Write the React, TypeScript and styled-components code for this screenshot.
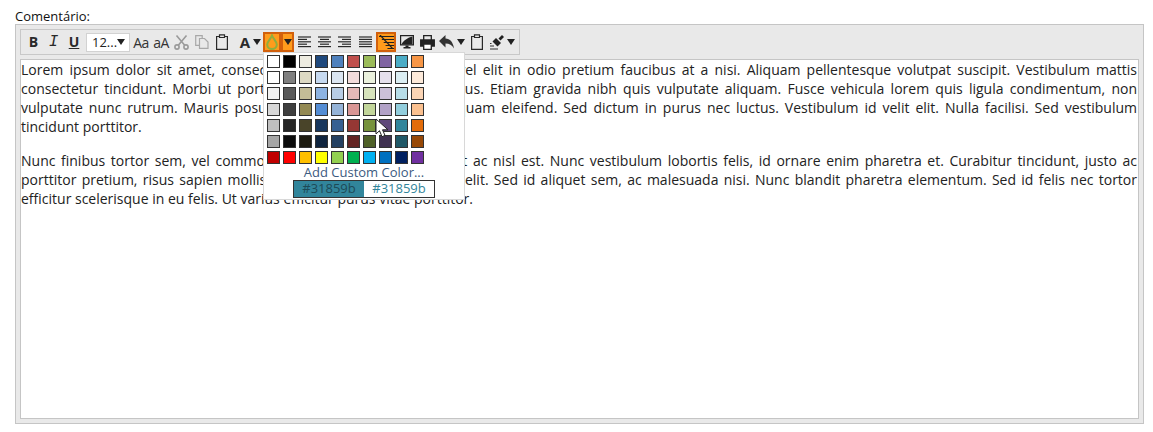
import React from 'react';
import styled, { createGlobalStyle } from 'styled-components';

const GlobalStyle = createGlobalStyle`
  html, body {
    margin: 0;
    padding: 0;
    background: #fff;
    font-family: "Open Sans", sans-serif;
    overflow: hidden;
  }
`;

const Page = styled.div`
  width: 1153px;
  height: 432px;
  padding: 9px 9px 0 15px;
  box-sizing: border-box;
`;

const Label = styled.label`
  display: block;
  height: 15px;
  font-size: 13px;
  line-height: 15px;
  color: #111;
`;

const EditorFrame = styled.div`
  position: relative;
  box-sizing: border-box;
  width: 1129px;
  height: 400px;
  padding: 4px;
  display: flex;
  flex-direction: column;
  gap: 4px;
  background: #e9e9e9;
  border: 1px solid #c5c5c5;
`;

const Toolbar = styled.div`
  box-sizing: border-box;
  align-self: flex-start;
  width: 500px;
  height: 26px;
  padding: 2px 3px;
  display: flex;
  align-items: center;
  border: 1px solid #c8c8c8;
  background: #e9e9e9;
`;

const ToolButton = styled.div<{ $w?: number; $active?: boolean; $pad?: number }>`
  box-sizing: border-box;
  flex: none;
  width: ${(p) => p.$w ?? 20}px;
  height: 20px;
  padding-left: ${(p) => p.$pad ?? 0}px;
  display: flex;
  align-items: center;
  justify-content: center;
  gap: 3px;
  color: #2a2a2a;
  background: ${(p) => (p.$active ? '#ff9c1c' : 'transparent')};
  border: ${(p) => (p.$active ? '2px solid #d2600c' : 'none')};
`;

const Glyph = styled.span<{ $under?: boolean; $size?: number }>`
  font-weight: 700;
  font-size: ${(p) => p.$size ?? 14}px;
  line-height: 16px;
  text-decoration: ${(p) => (p.$under ? 'underline' : 'none')};
`;

const ItalicGlyph = styled.span`
  font-family: "Liberation Mono", monospace;
  font-style: italic;
  font-size: 16px;
  line-height: 16px;
`;

const CaseGlyph = styled.span`
  font-size: 14px;
  letter-spacing: -0.5px;
  color: #333;
`;

const FontSelect = styled.div`
  box-sizing: border-box;
  flex: none;
  width: 44px;
  height: 19px;
  margin: 0 1px 0 2px;
  padding: 0 5px 0 5px;
  display: flex;
  align-items: center;
  justify-content: space-between;
  background: #fff;
  border: 1px solid #d2d2d2;
  font-size: 13px;
  color: #222;
`;

const Caret = styled.span`
  flex: none;
  width: 0;
  height: 0;
  border-left: 4.5px solid transparent;
  border-right: 4.5px solid transparent;
  border-top: 6px solid #222;
`;

const Content = styled.div`
  flex: 1;
  box-sizing: border-box;
  padding: 0 1px 0 0;
  background: #fff;
  border: 1px solid #c5c5c5;
  font-size: 14px;
  color: #222;
  text-align: justify;
`;

const Paragraph = styled.p`
  margin: 0 0 15px;
`;

const ColorPopup = styled.div`
  position: absolute;
  left: 247px;
  top: 27px;
  box-sizing: border-box;
  width: 202px;
  height: 148px;
  padding: 2px 3px 0;
  display: flex;
  flex-direction: column;
  align-items: center;
  background: #fff;
  border: 1px solid #d8d8d8;
`;

const SwatchGrid = styled.div`
  align-self: flex-start;
  display: grid;
  grid-template-columns: repeat(10, 13px);
  grid-auto-rows: 13px;
  gap: 3px;
`;

const Swatch = styled.div<{ $color: string }>`
  box-sizing: border-box;
  background: ${(p) => p.$color};
  border: 1px solid #333;
`;

const CustomColor = styled.div`
  margin-top: 1px;
  height: 15px;
  font-size: 13px;
  line-height: 15px;
  color: #3c5a80;
`;

const Preview = styled.div`
  box-sizing: border-box;
  width: 142px;
  height: 18px;
  display: flex;
  border: 1px solid #333;
  font-size: 13px;
  line-height: 15px;
  text-align: center;
`;

const PreviewOld = styled.div`
  flex: 1;
  background: #31859b;
  color: #1d4a57;
`;

const PreviewNew = styled.div`
  flex: 1;
  background: #fff;
  color: #31859b;
`;

const Cursor = styled.svg`
  position: absolute;
  left: 359px;
  top: 93px;
`;

const ICON_COLOR = '#2a2a2a';

function Scissors() {
  return (
    <svg width="15" height="15" viewBox="0 0 15 15" fill="none" stroke="#9a9a9a" strokeWidth="1.6">
      <circle cx="3" cy="12" r="2.100" />
      <circle cx="12" cy="12" r="2.100" />
      <path d="M4.300 10.300 12.500 .5M10.700 10.300 2.500 .5" />
    </svg>
  );
}

function CopyIcon() {
  return (
    <svg width="14" height="14" viewBox="0 0 14 14" fill="#e9e9e9" stroke="#a8a8a8" strokeWidth="1.200">
      <path d="M.7.7h6.500v9.600H.7z" />
      <path d="M4.500 3.500h5l3.500 3.500v6.300H4.500z" />
    </svg>
  );
}

function Clipboard() {
  return (
    <svg width="12" height="16" viewBox="0 0 12 16" fill="none" stroke={ICON_COLOR} strokeWidth="1.200">
      <path d="M3 2.500H.6v12.900h10.800V2.500H9" />
      <path d="M3.500.8h5v2.700h-5z" fill="#e9e9e9" />
    </svg>
  );
}

function Drop() {
  return (
    <svg width="12" height="16" viewBox="0 0 12 16" fill="none" stroke="#8fae3e" strokeWidth="2">
      <path d="M6 1.500C5 4.500 1.200 7.500 1.200 10.500a4.800 4.500 0 0 0 9.600 0C10.800 7.500 7 4.500 6 1.500z" />
    </svg>
  );
}

const ALIGN_LINES: Record<string, [number, number][]> = {
  left: [[0, 13], [0, 9], [0, 13], [0, 9], [0, 13]],
  center: [[0, 13], [2, 11], [0, 13], [2, 11], [0, 13]],
  right: [[0, 13], [4, 13], [0, 13], [4, 13], [0, 13]],
  justify: [[0, 13], [0, 13], [0, 13], [0, 13], [0, 13]],
};

function AlignIcon({ kind }: { kind: string }) {
  return (
    <svg width="13" height="12" viewBox="0 0 13 12" stroke={ICON_COLOR} strokeWidth="1.200">
      {ALIGN_LINES[kind].map(([x1, x2], i) => (
        <line key={i} x1={x1} x2={x2} y1={1 + i * 2.4} y2={1 + i * 2.4} />
      ))}
    </svg>
  );
}

function ClearFormat() {
  return (
    <svg width="15" height="14" viewBox="0 0 15 14" stroke="#222" strokeWidth="1">
      {[1.500, 4.500, 7.500, 10.500, 13.500].map((y) => (
        <line key={y} x1={y < 2 ? 0 : y / 1.6} x2="15" y1={y} y2={y} />
      ))}
      <line x1="1" y1="0" x2="14" y2="14" strokeWidth="1.200" />
    </svg>
  );
}

function Monitor() {
  return (
    <svg width="14" height="14" viewBox="0 0 14 14">
      <path d="M.6.6h12.800v9.200H.6z" fill="#e9e9e9" stroke="#222" strokeWidth="1.200" />
      <path d="M1.500 9.500C3 5.500 8 2.500 12.500 1.500v8z" fill="#222" />
      <path d="M5.500 10.500h3v1.500h2v1.500h-7V12h2z" fill="#222" />
    </svg>
  );
}

function Printer() {
  return (
    <svg width="15" height="15" viewBox="0 0 15 15" stroke="#222" strokeWidth="1.300">
      <path d="M3.700 5V.7h7.600V5" fill="#e9e9e9" />
      <path d="M.7 5h13.600v6h-3v-2H3.700v2h-3z" fill="#222" />
      <path d="M3.700 9h7.600v5.300H3.700z" fill="#fff" />
    </svg>
  );
}

function UndoArrow() {
  return (
    <svg width="15" height="14" viewBox="0 0 15 14">
      <path d="M0 6 6.500 0v3.600C11 3.800 14 7 15 13.500 13 10 10.500 8.500 6.500 8.500V12.500z" fill="#333" />
    </svg>
  );
}

function Brush() {
  return (
    <svg width="15" height="15" viewBox="0 0 15 15">
      <path d="M9.500 3.500 13 0l2 2-3.500 3.500z" fill="#222" />
      <path d="M7 3 12 8 8.500 11.500 3.500 6.500z" fill="#222" />
      <path d="M1 8.500h1.500M1 11h4M1 14h8" stroke="#333" strokeWidth="1.200" />
    </svg>
  );
}

const PALETTE = [
  ['#ffffff', '#000000', '#eeece1', '#1f497d', '#4f81bd', '#c0504d', '#9bbb59', '#8064a2', '#4bacc6', '#f79646'],
  ['#ffffff', '#7f7f7f', '#ddd9c3', '#c6d9f0', '#dbe5f1', '#f2dcdb', '#ebf1dd', '#e5e0ec', '#dbeef3', '#fdeada'],
  ['#f2f2f2', '#595959', '#c4bd97', '#8db3e2', '#b8cce4', '#e5b9b7', '#d7e3bc', '#ccc1d9', '#b7dde8', '#fbd5b5'],
  ['#d8d8d8', '#3f3f3f', '#938953', '#548dd4', '#95b3d7', '#d99694', '#c3d69b', '#b2a2c7', '#92cddc', '#fac08f'],
  ['#bfbfbf', '#262626', '#494429', '#17365d', '#366092', '#953734', '#76923c', '#5f497a', '#31859b', '#e36c09'],
  ['#a5a5a5', '#0c0c0c', '#1d1b10', '#0f243e', '#244061', '#632423', '#4f6128', '#3f3151', '#205867', '#974806'],
  ['#c00000', '#ff0000', '#ffc000', '#ffff00', '#92d050', '#00b050', '#00b0f0', '#0070c0', '#002060', '#7030a0'],
];

export default function App() {
  return (
    <Page>
      <GlobalStyle />
      <Label>{'Comentário:'}</Label>
      <EditorFrame>
        <Toolbar>
          <ToolButton $w={19}><Glyph>{'B'}</Glyph></ToolButton>
          <ToolButton $w={21}><ItalicGlyph>{'I'}</ItalicGlyph></ToolButton>
          <ToolButton><Glyph $under>{'U'}</Glyph></ToolButton>
          <FontSelect>{'12...'}<Caret /></FontSelect>
          <ToolButton><CaseGlyph>{'Aa'}</CaseGlyph></ToolButton>
          <ToolButton><CaseGlyph>{'aA'}</CaseGlyph></ToolButton>
          <ToolButton $w={21}><Scissors /></ToolButton>
          <ToolButton><CopyIcon /></ToolButton>
          <ToolButton><Clipboard /></ToolButton>
          <ToolButton $w={31} $pad={6}><Glyph $size={15}>{'A'}</Glyph><Caret /></ToolButton>
          <ToolButton $w={18} $active><Drop /></ToolButton>
          <ToolButton $w={13} $active><Caret /></ToolButton>
          <ToolButton><AlignIcon kind="left" /></ToolButton>
          <ToolButton><AlignIcon kind="center" /></ToolButton>
          <ToolButton $w={21}><AlignIcon kind="right" /></ToolButton>
          <ToolButton $w={21}><AlignIcon kind="justify" /></ToolButton>
          <ToolButton $active><ClearFormat /></ToolButton>
          <ToolButton $w={21}><Monitor /></ToolButton>
          <ToolButton><Printer /></ToolButton>
          <ToolButton $w={30}><UndoArrow /><Caret /></ToolButton>
          <ToolButton><Clipboard /></ToolButton>
          <ToolButton $w={30}><Brush /><Caret /></ToolButton>
        </Toolbar>
        <Content>
          <Paragraph>
            {'Lorem ipsum dolor sit amet, consectetur adipiscing elit. Integer vel elit in odio pretium faucibus at a nisi. Aliquam pellentesque volutpat suscipit. Vestibulum mattis consectetur tincidunt. Morbi ut porttitor elit nisl, at commodo risus. Etiam gravida nibh quis vulputate aliquam. Fusce vehicula lorem quis ligula condimentum, non vulputate\u00a0nunc rutrum. Mauris posuere tellus ut es nulla sed aliquam eleifend. Sed dictum in purus nec luctus. Vestibulum id velit elit. Nulla facilisi. Sed vestibulum tincidunt porttitor.'}
          </Paragraph>
          <Paragraph>
            {'Nunc finibus tortor sem, vel commodo sem dapibus ac. Integer et ac nisl est. Nunc vestibulum lobortis felis, id ornare enim pharetra et. Curabitur tincidunt, justo ac porttitor pretium, risus sapien mollis nisi, quis tempor auctor sed elit. Sed id aliquet sem, ac malesuada nisi. Nunc blandit pharetra elementum. Sed id felis nec tortor efficitur scelerisque in eu felis. Ut varius efficitur purus vitae porttitor.'}
          </Paragraph>
        </Content>
        <ColorPopup>
          <SwatchGrid>
            {PALETTE.flat().map((color, i) => (
              <Swatch key={i} $color={color} />
            ))}
          </SwatchGrid>
          <CustomColor>{'Add Custom Color...'}</CustomColor>
          <Preview>
            <PreviewOld>{'#31859b'}</PreviewOld>
            <PreviewNew>{'#31859b'}</PreviewNew>
          </Preview>
        </ColorPopup>
        <Cursor width="14" height="21" viewBox="0 0 14 21">
          <path d="M1 1v15l3.500-3.300 2.500 6 3-1.300-2.500-5.600H13z" fill="#fff" stroke="#222" strokeWidth="1" />
        </Cursor>
      </EditorFrame>
    </Page>
  );
}
